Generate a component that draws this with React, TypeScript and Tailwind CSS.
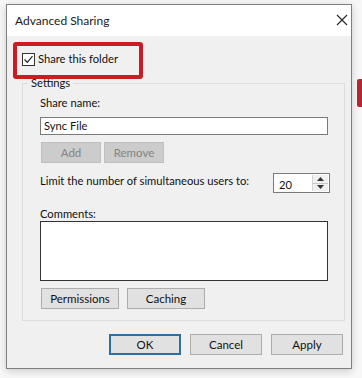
const font = "font-['Lato','Noto_Sans',sans-serif]";

function WinButton({ label, disabled, primary, width }: { label: string; disabled?: boolean; primary?: boolean; width: string }) {
  const base = `${width} h-[21px] flex items-center justify-center text-[11.5px] leading-none`;
  if (disabled) return <div className={`${base} bg-[#cccccc] border border-[#bfbfbf] text-[#838383]`}>{label}</div>;
  if (primary) return <div className={`${base} bg-[#e1e1e1] border-2 border-[#2e6fa3] text-[#111]`}>{label}</div>;
  return <div className={`${base} bg-[#e1e1e1] border border-[#adadad] text-[#111]`}>{label}</div>;
}

export default function App() {
  return (
    <div className={`relative w-[362px] h-[378px] bg-[#f7f7f7] overflow-hidden pt-[4px] pl-[6px] ${font}`}>
      {/* red edge of something behind the window */}
      <div className="absolute left-[357px] top-[79px] w-[8px] h-[28px] bg-[#b3282c] rounded-l-[2px]" />

      <div className="w-[346px] h-[365px] border border-[#7f7f7f] bg-[#f0f0f0] shadow-[0_2px_8px_rgba(0,0,0,0.18)] flex flex-col">
        {/* title bar */}
        <div className="h-[31px] bg-white flex items-center pl-[8px] pr-[3px]">
          <span className="text-[12px] text-[#1a1a1a] mt-[1px]">Advanced Sharing</span>
          <svg className="ml-auto mt-[-1px]" width="12" height="12" viewBox="0 0 12 12">
            <path d="M1 1 L11 11 M11 1 L1 11" stroke="#222" strokeWidth="1.1" />
          </svg>
        </div>

        <div className="flex-1 pl-[15px] pr-[6px] flex flex-col text-[11.2px]">
          {/* checkbox row */}
          <div className="flex items-center gap-[3px] mt-[17px] h-[13px]">
            <div className="w-[13px] h-[13px] border border-[#333] bg-white flex items-center justify-center">
              <svg width="11" height="11" viewBox="0 0 11 11">
                <path d="M1.5 5.5 L4.3 8.3 L9.5 2.2" fill="none" stroke="#222" strokeWidth="1.2" />
              </svg>
            </div>
            <span className="text-[#111] whitespace-nowrap">Share this folder</span>
          </div>

          {/* settings group */}
          <fieldset className="mt-[10px] border border-[#dcdcdc] h-[245px] pl-[17px] pr-[14px]">
            <legend className="ml-[-12px] px-[3px] leading-[14px] text-[#111]">Settings</legend>
            <div className="leading-[16px] text-[#111] mt-[5px]">Share name:</div>
            <div className="mt-[6px] h-[18px] w-[288px] border border-[#7a7a7a] bg-white flex items-center pl-[3px] text-[#111]">
              Sync File
            </div>
            <div className="mt-[7px] flex gap-[3px] pl-[1px]">
              <WinButton label="Add" disabled width="w-[60px]" />
              <WinButton label="Remove" disabled width="w-[60px]" />
            </div>
            <div className="mt-[10px] flex items-center">
              <span className="text-[#111] mt-[-4px] whitespace-nowrap">Limit the number of simultaneous users to:</span>
              <div className="ml-auto w-[57px] h-[20px] border border-[#7a7a7a] bg-white flex">
                <span className="flex-1 text-[#111] pl-[5px] pt-[3px]">20</span>
                <div className="w-[16px] flex flex-col border-l border-[#d4d4d4] bg-[#f0f0f0] m-[1px]">
                  <div className="flex-1 flex items-center justify-center border-b border-[#c8c8c8]">
                    <svg width="7" height="4" viewBox="0 0 7 4"><path d="M0 4 L3.5 0 L7 4 Z" fill="#333" /></svg>
                  </div>
                  <div className="flex-1 flex items-center justify-center">
                    <svg width="7" height="4" viewBox="0 0 7 4"><path d="M0 0 L3.5 4 L7 0 Z" fill="#333" /></svg>
                  </div>
                </div>
              </div>
            </div>
            <div className="leading-[16px] text-[#111] mt-[13px]">Comments:</div>
            <div className="mt-[-1px] h-[60px] w-[288px] border border-[#333] bg-white" />
            <div className="mt-[7px] flex gap-[8px] pl-[1px]">
              <WinButton label="Permissions" width="w-[78px]" />
              <WinButton label="Caching" width="w-[78px]" />
            </div>
          </fieldset>

          {/* dialog buttons */}
          <div className="mt-[13px] flex justify-end gap-[9px] pr-[2px]">
            <WinButton label="OK" primary width="w-[72px]" />
            <WinButton label="Cancel" width="w-[72px]" />
            <WinButton label="Apply" width="w-[72px]" />
          </div>
        </div>
      </div>

      {/* red highlight annotation */}
      <div className="absolute left-[13px] top-[42px] w-[130px] h-[37px] border-[4px] border-[#cc1b22] rounded-[3px]" />
    </div>
  );
}
